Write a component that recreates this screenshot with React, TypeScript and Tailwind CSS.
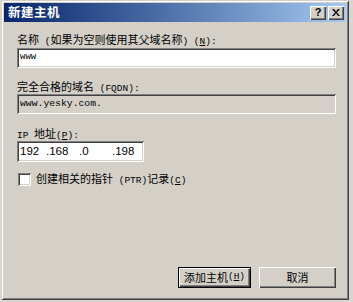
import React from 'react'

const cjk = "font-['SimSun','Noto_Sans_CJK_SC',sans-serif]"
const sunken =
  'shadow-[inset_1px_1px_0_#808080,inset_-1px_-1px_0_#ffffff,inset_2px_2px_0_#404040,inset_-2px_-2px_0_#d4d0c8]'
const raised =
  'shadow-[inset_1px_1px_0_#ffffff,inset_-1px_-1px_0_#404040,inset_-2px_-2px_0_#808080]'

function M({ children }: { children: React.ReactNode }) {
  return <span className="font-['Liberation_Mono',monospace] text-[9.5px]">{children}</span>
}

function TitleButton({ children }: { children: React.ReactNode }) {
  return (
    <div className={`flex h-[14px] w-[16px] items-center justify-center bg-[#d4d0c8] ${raised} text-[11px] font-bold leading-none text-black font-['Liberation_Sans',sans-serif]`}>
      {children}
    </div>
  )
}

export default function App() {
  return (
    <div className="h-[302px] w-[353px] bg-[#d8d6d0] pl-[1px]">
      <div className={`flex h-[300px] w-[348px] flex-col bg-[#d4d0c8] p-[3px] shadow-[inset_1px_1px_0_#d4d0c8,inset_-1px_-1px_0_#404040,inset_2px_2px_0_#ffffff,inset_-2px_-2px_0_#808080] ${cjk} text-[11px] text-black`}>
        {/* Title bar */}
        <div className="flex h-[19px] items-center justify-between bg-gradient-to-r from-[#0a246a] to-[#a6caf0] pl-[4px] pr-[2px]">
          <span className="text-[12.5px] font-bold tracking-[0.5px] text-white">新建主机</span>
          <div className="flex gap-[2px]">
            <TitleButton>?</TitleButton>
            <TitleButton>
              <svg width="8" height="7" viewBox="0 0 8 7">
                <path d="M0 0h2l2 2.5L6 0h2L5 3.5 8 7H6L4 4.5 2 7H0l3-3.5z" fill="#000" />
              </svg>
            </TitleButton>
          </div>
        </div>

        {/* Body */}
        <div className="flex flex-1 flex-col pl-[13px] pr-[9px] pt-[10px]">
          <div className="h-[14px] leading-[14px]">
            名称<M> (</M>如果为空则使用其父域名称<M>) (<u>N</u>):</M>
          </div>
          <div className={`mt-[2px] flex h-[20px] w-[319px] items-center bg-white pl-[3px] ${sunken}`}>
            <span className="font-['Liberation_Mono',monospace] text-[9px]">www</span>
          </div>

          <div className="mt-[11px] h-[14px] leading-[14px]">
            完全合格的域名<M> (FQDN):</M>
          </div>
          <div className={`mt-[1px] flex h-[20px] w-[319px] items-center bg-[#d4d0c8] pl-[3px] ${sunken}`}>
            <span className="font-['Liberation_Mono',monospace] text-[9.75px]">www.yesky.com.</span>
          </div>

          <div className="mt-[12px] h-[14px] leading-[14px]">
            <M>IP </M>地址<M>(<u>P</u>):</M>
          </div>
          <div className={`mt-[1px] flex h-[21px] w-[127px] items-center bg-white pl-[3px] ${sunken} font-['Liberation_Sans',sans-serif] text-[11.5px]`}>
            <span className="w-[26px]">192</span>
            <span className="w-[33px]">.168</span>
            <span className="w-[33px]">.0</span>
            <span>.198</span>
          </div>

          <div className="mt-[9px] flex items-center gap-[5px] pl-[1px]">
            <div className={`h-[13px] w-[13px] bg-white ${sunken}`} />
            <span className="leading-[14px]">
              创建相关的指针<M> (PTR)</M>记录<M>(<u>C</u>)</M>
            </span>
          </div>

          <div className="mt-auto mb-[9px] flex justify-end gap-[8px] pr-[1px]">
            <div className="h-[21px] w-[73px] border border-black">
              <div className={`flex h-full items-center justify-center ${raised}`}>
                添加主机<M>(<u>H</u>)</M>
              </div>
            </div>
            <div className={`flex h-[21px] w-[77px] items-center justify-center ${raised}`}>
              取消
            </div>
          </div>
        </div>
      </div>
    </div>
  )
}
